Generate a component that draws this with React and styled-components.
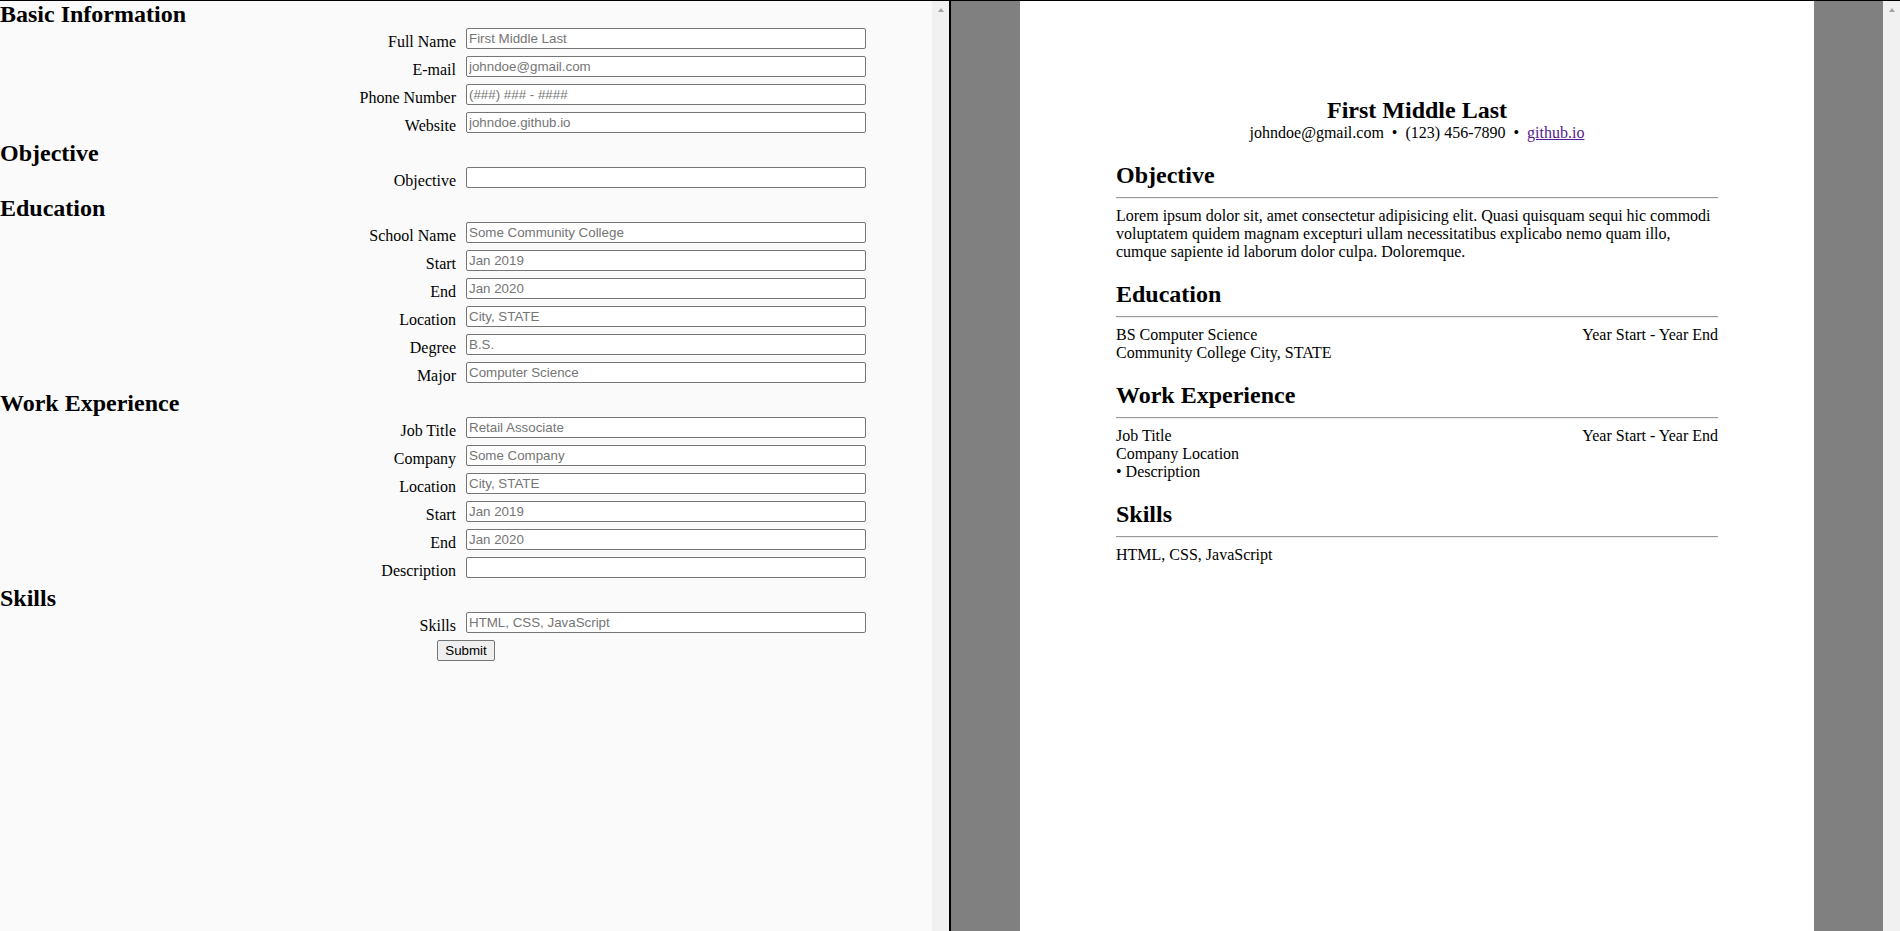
import React from 'react';
import styled, { createGlobalStyle } from 'styled-components';

const GlobalStyle = createGlobalStyle`
  html, body {
    margin: 0;
    padding: 0;
    height: 100%;
    overflow: hidden;
  }
  body {
    font-family: "Liberation Serif", "Times New Roman", serif;
    font-size: 16px;
    color: #000;
  }
  #root {
    height: 100%;
  }
`;

const Split = styled.div`
  display: flex;
  height: 100vh;
  box-sizing: border-box;
  border-top: 1px solid #000;
`;

const Pane = styled.div`
  flex: 1;
  min-width: 0;
  display: flex;
  box-sizing: border-box;
  border-${props => props.$side}: 1px solid #000;
`;

const EditorBody = styled.div`
  flex: 1;
  min-width: 0;
  overflow: hidden;
  background: #fafafa;
`;

const PreviewBody = styled.div`
  flex: 1;
  min-width: 0;
  overflow: hidden;
  background: #808080;
`;

// classic scrollbar strip: track with the up arrow, no thumb
const ScrollTrack = styled.div`
  flex: 0 0 17px;
  display: flex;
  justify-content: center;
  align-items: flex-start;
  padding-top: 6.5px;
  box-sizing: border-box;
  background: #f1f1f1;
`;

const ScrollArrow = styled.span`
  width: 0;
  height: 0;
  border-left: 3.5px solid transparent;
  border-right: 3.5px solid transparent;
  border-bottom: 4px solid #a3a3a3;
`;

const FormHeading = styled.h2`
  margin: 0;
  font-size: 24px;
  font-weight: bold;
  line-height: normal;
`;

const Row = styled.div`
  display: grid;
  grid-template-columns: 1fr 1fr;
  align-items: end;
  margin-bottom: 7px;
`;

const Label = styled.label`
  text-align: right;
  padding-right: 10px;
  line-height: 14px;
`;

const Field = styled.input`
  box-sizing: border-box;
  width: 400px;
  height: 21px;
  margin: 0;
  padding: 1px 2px;
  border: 1px solid #767676;
  border-radius: 2px;
  background: #fff;
  font-family: "Liberation Sans", Arial, sans-serif;
  font-size: 13.333px;
  color: #000;

  &::placeholder {
    color: #757575;
  }
`;

const SubmitRow = styled.div`
  display: flex;
  justify-content: center;
`;

const SubmitButton = styled.button`
  box-sizing: border-box;
  height: 21px;
  padding: 0 7px;
  border: 1px solid #767676;
  border-radius: 2px;
  background: #efefef;
  font-family: "Liberation Sans", Arial, sans-serif;
  font-size: 13.333px;
  color: #000;
`;

const Page = styled.div`
  box-sizing: border-box;
  width: 794px;
  min-height: 1123px;
  margin: 0 auto;
  padding: 96px;
  background: #fff;
`;

const Name = styled.h1`
  margin: 0;
  font-size: 24px;
  font-weight: bold;
  line-height: normal;
  text-align: center;
`;

const Contact = styled.p`
  margin: 0;
  text-align: center;
`;

const SiteLink = styled.a`
  color: #551a8b;
  text-decoration: underline;
`;

const SectionTitle = styled.h2`
  margin: 20px 0 0;
  font-size: 24px;
  font-weight: bold;
  line-height: normal;
`;

const Rule = styled.hr`
  height: 0;
  margin: 8px 0;
  border: none;
  border-top: 1px solid #9a9a9a;
  border-bottom: 1px solid #eeeeee;
`;

const Text = styled.p`
  margin: 0;
`;

const Entry = styled.div`
  display: flex;
  justify-content: space-between;
`;

const formSections = [
  {
    title: 'Basic Information',
    fields: [
      { label: 'Full Name', placeholder: 'First Middle Last' },
      { label: 'E-mail', placeholder: 'johndoe@gmail.com' },
      { label: 'Phone Number', placeholder: '(###) ### - ####' },
      { label: 'Website', placeholder: 'johndoe.github.io' },
    ],
  },
  {
    title: 'Objective',
    fields: [{ label: 'Objective', placeholder: '' }],
  },
  {
    title: 'Education',
    fields: [
      { label: 'School Name', placeholder: 'Some Community College' },
      { label: 'Start', placeholder: 'Jan 2019' },
      { label: 'End', placeholder: 'Jan 2020' },
      { label: 'Location', placeholder: 'City, STATE' },
      { label: 'Degree', placeholder: 'B.S.' },
      { label: 'Major', placeholder: 'Computer Science' },
    ],
  },
  {
    title: 'Work Experience',
    fields: [
      { label: 'Job Title', placeholder: 'Retail Associate' },
      { label: 'Company', placeholder: 'Some Company' },
      { label: 'Location', placeholder: 'City, STATE' },
      { label: 'Start', placeholder: 'Jan 2019' },
      { label: 'End', placeholder: 'Jan 2020' },
      { label: 'Description', placeholder: '' },
    ],
  },
  {
    title: 'Skills',
    fields: [{ label: 'Skills', placeholder: 'HTML, CSS, JavaScript' }],
  },
];

const sep = '\u00a0 • \u00a0';

const App = () => {
  return (
    <>
      <GlobalStyle />
      <Split>
        <Pane $side="right">
          <EditorBody>
            <form onSubmit={e => e.preventDefault()}>
              {formSections.map(section => (
                <div key={section.title}>
                  <FormHeading>{section.title}</FormHeading>
                  {section.fields.map((field, i) => {
                    const id = `${section.title}-${i}`.replace(/\s+/g, '-').toLowerCase();
                    return (
                      <Row key={id}>
                        <Label htmlFor={id}>{field.label}</Label>
                        <Field id={id} type="text" placeholder={field.placeholder} />
                      </Row>
                    );
                  })}
                </div>
              ))}
              <SubmitRow>
                <SubmitButton type="submit">Submit</SubmitButton>
              </SubmitRow>
            </form>
          </EditorBody>
          <ScrollTrack>
            <ScrollArrow />
          </ScrollTrack>
        </Pane>

        <Pane $side="left">
          <PreviewBody>
            <Page>
              <Name>First Middle Last</Name>
              <Contact>
                johndoe@gmail.com{sep}(123) 456-7890{sep}
                <SiteLink href="#">github.io</SiteLink>
              </Contact>

              <SectionTitle>Objective</SectionTitle>
              <Rule />
              <Text>
                Lorem ipsum dolor sit, amet consectetur adipisicing elit. Quasi quisquam sequi hic
                commodi voluptatem quidem magnam excepturi ullam necessitatibus explicabo nemo quam
                illo, cumque sapiente id laborum dolor culpa. Doloremque.
              </Text>

              <SectionTitle>Education</SectionTitle>
              <Rule />
              <Entry>
                <span>BS Computer Science</span>
                <span>Year Start - Year End</span>
              </Entry>
              <Text>Community College City, STATE</Text>

              <SectionTitle>Work Experience</SectionTitle>
              <Rule />
              <Entry>
                <span>Job Title</span>
                <span>Year Start - Year End</span>
              </Entry>
              <Text>Company Location</Text>
              <Text>• Description</Text>

              <SectionTitle>Skills</SectionTitle>
              <Rule />
              <Text>HTML, CSS, JavaScript</Text>
            </Page>
          </PreviewBody>
          <ScrollTrack>
            <ScrollArrow />
          </ScrollTrack>
        </Pane>
      </Split>
    </>
  );
};

export default App;
